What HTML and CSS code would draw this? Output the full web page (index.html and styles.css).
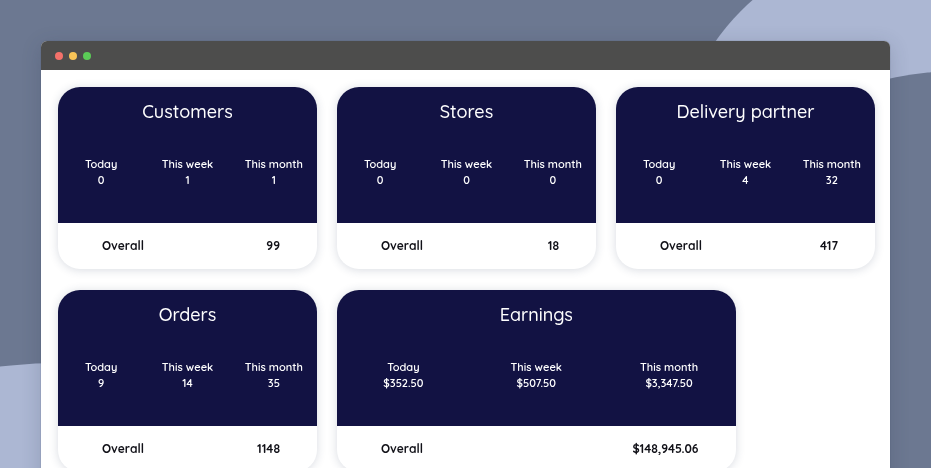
FILE: index.html
```html
<!DOCTYPE html>
<html lang="en">
<head>
<meta charset="utf-8">
<meta name="viewport" content="width=device-width, initial-scale=1">
<title>Dashboard</title>
<link rel="stylesheet" href="styles.css">
</head>
<body>
<div class="backdrop" aria-hidden="true">
  <span class="disc disc-light"></span>
  <span class="disc disc-dark"></span>
  <span class="disc disc-corner"></span>
</div>
<div class="window">
  <header class="titlebar">
    <span class="dot dot-red"></span>
    <span class="dot dot-yellow"></span>
    <span class="dot dot-green"></span>
  </header>
  <main class="cards">
    <section class="card">
      <div class="card-main">
        <h2 class="card-title">Customers</h2>
        <dl class="stats">
          <div class="stat"><dt>Today</dt><dd>0</dd></div>
          <div class="stat"><dt>This week</dt><dd>1</dd></div>
          <div class="stat"><dt>This month</dt><dd>1</dd></div>
        </dl>
      </div>
      <div class="card-total"><span>Overall</span><span>99</span></div>
    </section>
    <section class="card">
      <div class="card-main">
        <h2 class="card-title">Stores</h2>
        <dl class="stats">
          <div class="stat"><dt>Today</dt><dd>0</dd></div>
          <div class="stat"><dt>This week</dt><dd>0</dd></div>
          <div class="stat"><dt>This month</dt><dd>0</dd></div>
        </dl>
      </div>
      <div class="card-total"><span>Overall</span><span>18</span></div>
    </section>
    <section class="card">
      <div class="card-main">
        <h2 class="card-title">Delivery partner</h2>
        <dl class="stats">
          <div class="stat"><dt>Today</dt><dd>0</dd></div>
          <div class="stat"><dt>This week</dt><dd>4</dd></div>
          <div class="stat"><dt>This month</dt><dd>32</dd></div>
        </dl>
      </div>
      <div class="card-total"><span>Overall</span><span>417</span></div>
    </section>
    <section class="card">
      <div class="card-main">
        <h2 class="card-title">Orders</h2>
        <dl class="stats">
          <div class="stat"><dt>Today</dt><dd>9</dd></div>
          <div class="stat"><dt>This week</dt><dd>14</dd></div>
          <div class="stat"><dt>This month</dt><dd>35</dd></div>
        </dl>
      </div>
      <div class="card-total"><span>Overall</span><span>1148</span></div>
    </section>
    <section class="card card-wide">
      <div class="card-main">
        <h2 class="card-title">Earnings</h2>
        <dl class="stats">
          <div class="stat"><dt>Today</dt><dd>$352.50</dd></div>
          <div class="stat"><dt>This week</dt><dd>$507.50</dd></div>
          <div class="stat"><dt>This month</dt><dd>$3,347.50</dd></div>
        </dl>
      </div>
      <div class="card-total"><span>Overall</span><span>$148,945.06</span></div>
    </section>
  </main>
</div>
</body>
</html>
```
FILE: styles.css
```css
* {
  box-sizing: border-box;
}

body {
  margin: 0;
  height: 100vh;
  overflow: hidden;
  padding: 41px 41px 0;
  background: #6c7891;
  color: #111118;
  font-family: Quicksand, Lato, sans-serif;
  font-weight: 500;
}

.backdrop {
  position: fixed;
  inset: 0;
  overflow: hidden;
}

.disc {
  position: absolute;
  border-radius: 50%;
}

.disc-light {
  top: -55px;
  right: -194px;
  width: 450px;
  height: 450px;
  background: #acb7d3;
}

.disc-dark {
  top: 71px;
  right: -358px;
  width: 658px;
  height: 658px;
  background: #6c7891;
}

.disc-corner {
  top: 363px;
  left: -440px;
  width: 1000px;
  height: 1000px;
  background: #acb7d3;
}

.window {
  position: relative;
  min-height: 100%;
  border-radius: 6px 6px 0 0;
  background: #fff;
  box-shadow: 0 4px 20px rgba(40, 48, 75, 0.2), 0 0 1px #4d5468;
}

.titlebar {
  display: flex;
  align-items: center;
  gap: 6px;
  height: 29px;
  padding: 0 14px;
  border-radius: 6px 6px 0 0;
  background: #4d4d4c;
}

.dot {
  width: 8px;
  height: 8px;
  border-radius: 50%;
}

.dot-red {
  background: #f4716a;
}

.dot-yellow {
  background: #f8c457;
}

.dot-green {
  background: #5bcb57;
}

.cards {
  display: grid;
  grid-template-columns: repeat(12, 1fr);
  gap: 21px 20px;
  padding: 17px 15px 20px 17px;
}

.card {
  grid-column: span 4;
  overflow: hidden;
  border-radius: 22px;
  background: #fff;
  box-shadow: 0 1px 10px rgba(40, 55, 90, 0.18);
}

.card-wide {
  grid-column: span 6;
}

.card-main {
  height: 136px;
  padding-top: 13px;
  background: #121243;
  color: #fff;
}

.card-title {
  margin: 0 0 32px;
  font-size: 18px;
  line-height: 24px;
  font-weight: 500;
  text-align: center;
}

.stats {
  display: grid;
  grid-template-columns: repeat(3, 1fr);
  margin: 0;
  font-size: 11px;
  line-height: 16px;
  font-weight: 600;
  text-align: center;
}

.stat dd {
  margin: 0;
}

.card-total {
  display: flex;
  justify-content: space-between;
  align-items: center;
  height: 46px;
  padding: 0 37px 2px 44px;
  font-size: 12px;
  font-weight: 700;
}
```
